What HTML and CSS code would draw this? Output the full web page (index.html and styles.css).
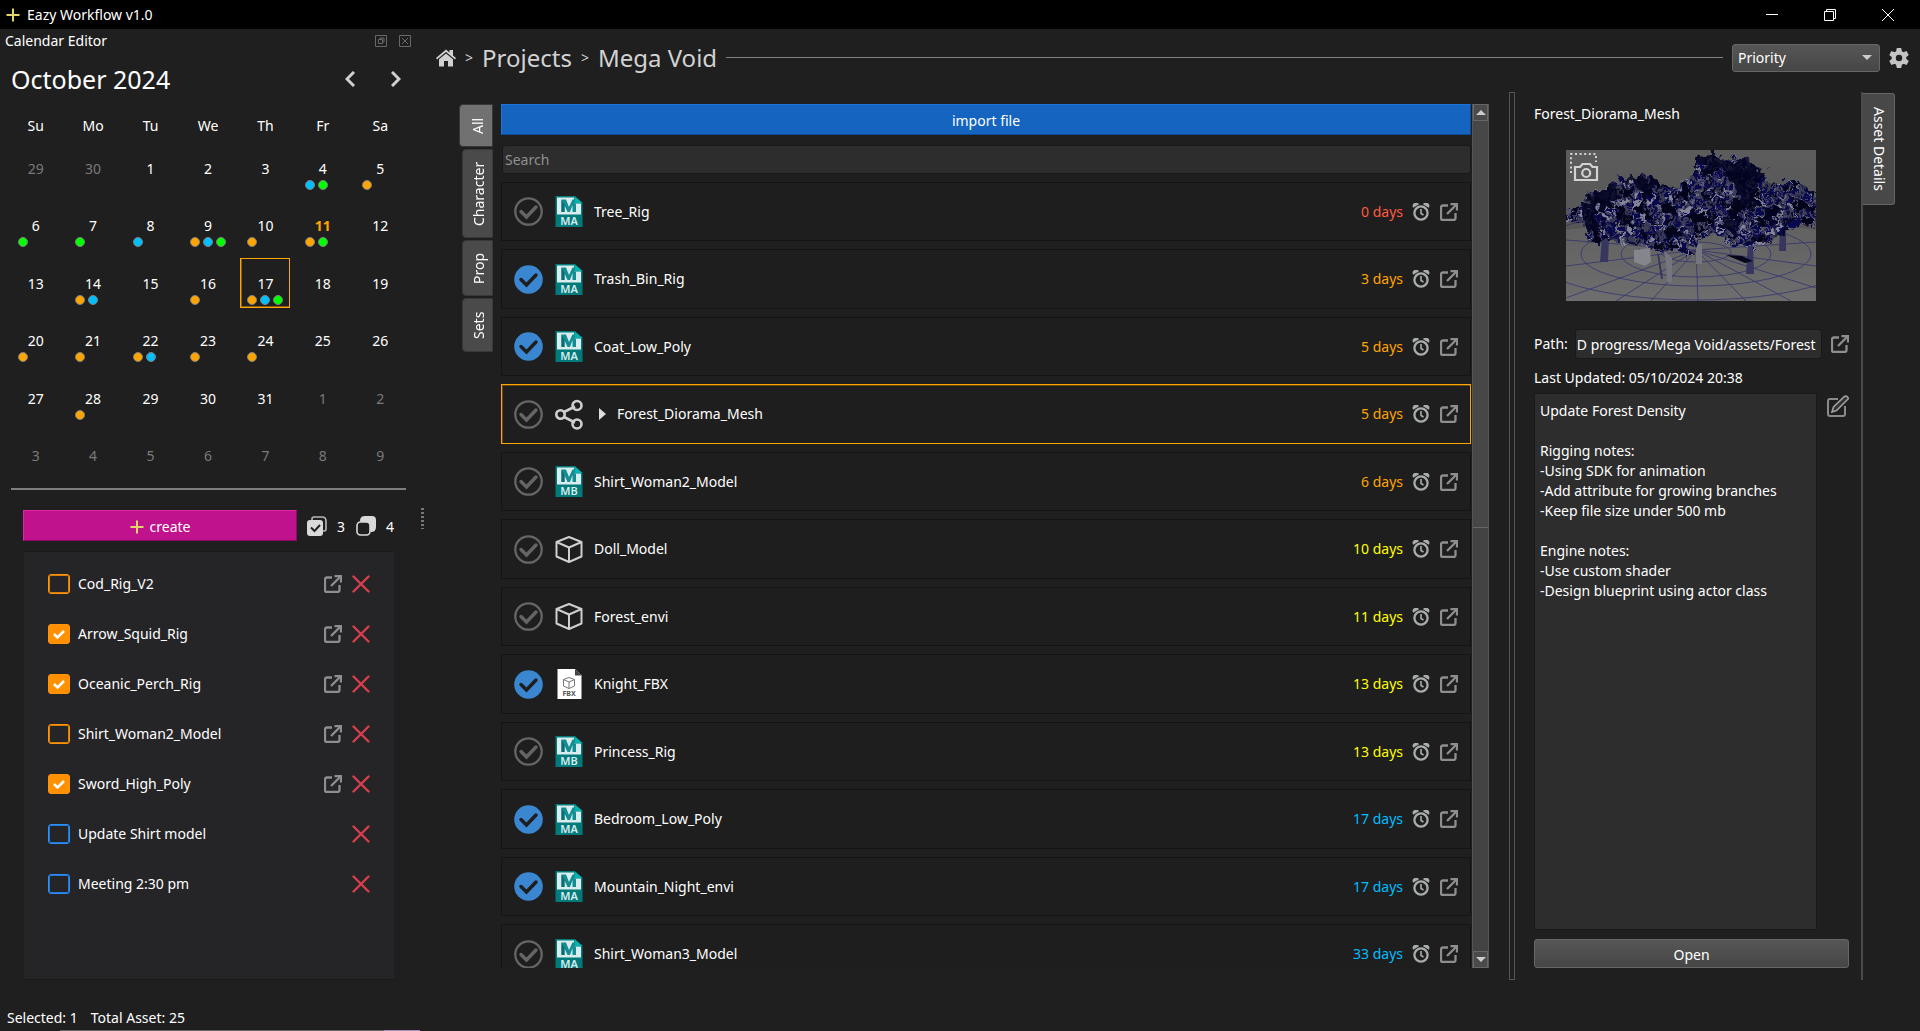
FILE: index.html
```html
<!DOCTYPE html>
<html lang="en">
<head>
<meta charset="utf-8">
<title>Eazy Workflow v1.0</title>
<link rel="stylesheet" href="styles.css">
</head>
<body>
<svg class="sprite" aria-hidden="true">
  <symbol id="plus" viewBox="0 0 14 14"><path d="M7 .5v13M.5 7h13" fill="none" stroke="#e3d56c" stroke-width="2"/></symbol>
  <symbol id="open" viewBox="0 0 18 18"><path d="M8 2.500H3Q1 2.500 1 4.500V15Q1 17 3 17H13.500Q15.500 17 15.500 15V10" fill="none" stroke="currentColor" stroke-width="2.300"/><path d="M7 11L16 2M10.500 1.200H17V7.500" fill="none" stroke="currentColor" stroke-width="2.300"/></symbol>
  <symbol id="cross" viewBox="0 0 18 18"><path d="M1.500 1.500l15 15M16.500 1.500l-15 15" fill="none" stroke="currentColor" stroke-width="2.400" stroke-linecap="round"/></symbol>
  <symbol id="alarm" viewBox="0 0 18 18"><circle cx="9" cy="10" r="6.600" fill="none" stroke="currentColor" stroke-width="2.300"/><path d="M9 6v4.500l2.500 1.500" fill="none" stroke="currentColor" stroke-width="1.600"/><path d="M1.200 4.800A3 3 0 0 1 7 1.200zM16.800 4.800A3 3 0 0 0 11 1.200z" fill="currentColor"/></symbol>
  <symbol id="share" viewBox="0 0 28 30"><path d="M8 13L20 7M8 17L20 23" stroke="currentColor" stroke-width="2.600"/><g fill="none" stroke="currentColor" stroke-width="2.600"><circle cx="5.500" cy="15" r="4.200"/><circle cx="22" cy="6" r="4.500"/><circle cx="22" cy="24.500" r="4.500"/></g></symbol>
  <symbol id="cube" viewBox="0 0 28 28"><path d="M14 1.500L26.500 6.500V21L14 26.500L1.500 21V6.500zM1.500 6.500L14 12L26.500 6.500M14 12V26.500" fill="none" stroke="currentColor" stroke-width="2" stroke-linejoin="round"/></symbol>
  <symbol id="maya" viewBox="0 0 27 31"><path d="M0 0H19L27 7V31H0z" fill="#007a7a"/><path d="M1.500 1.500H18.500V7.500H25.500V18.500H1.500z" fill="#d9ecee"/><path d="M19 0V7H27z" fill="#00b3b0"/><path d="M6 3.500H10.500L13.500 11L17 3.500H18.500V7.500H20.500V16H17V9L14.500 16H12L9 9.500V16H6z" fill="#138d92"/><path d="M6 3.500L9 9.500V16H6z" fill="#0b6b73"/></symbol>
  <symbol id="fbx" viewBox="0 0 25 31"><path d="M1 0H18.500L25 6.500V30H1z" fill="#fff"/><path d="M18.500 0L25 6.500H18.500z" fill="#444"/><path d="M12.500 8.500L18 10.500V17L12.500 19.500L7 17V10.500zM7 10.500L12.500 13L18 10.500M12.500 13V19.500" fill="none" stroke="#777" stroke-width="1"/></symbol>
</svg>

<header class="titlebar">
  <svg class="i14"><use href="#plus"/></svg>
  <span>Eazy Workflow v1.0</span>
  <div class="window-buttons">
    <button aria-label="Minimize"><svg viewBox="0 0 12 12"><path d="M0 5.500h12"/></svg></button>
    <button aria-label="Restore"><svg viewBox="0 0 12 12"><path d="M.5 2.500h9v9h-9zM2.500 2.500v-2h9v9h-2"/></svg></button>
    <button aria-label="Close"><svg viewBox="0 0 12 12"><path d="M0 0l12 12M12 0L0 12"/></svg></button>
  </div>
</header>

<div class="workspace">
  <aside class="sidebar">
    <div class="dock-title">
      <h2>Calendar Editor</h2>
      <button aria-label="Float"><svg viewBox="0 0 12 12"><path d="M.5.5h11v11h-11zM3.500 4.500h4v4h-4zM5 4V3h4v4H8"/></svg></button>
      <button aria-label="Close panel"><svg viewBox="0 0 12 12"><path d="M.5.5h11v11h-11zM3 3l6 6M9 3L3 9"/></svg></button>
    </div>
    <div class="month">
      <h1>October 2024</h1>
      <button aria-label="Previous month"><svg viewBox="0 0 10 16"><path d="M9 1L2 8l7 7"/></svg></button>
      <button aria-label="Next month"><svg viewBox="0 0 10 16"><path d="M1 1l7 7-7 7"/></svg></button>
    </div>
    <table class="calendar">
      <thead><tr><th>Su</th><th>Mo</th><th>Tu</th><th>We</th><th>Th</th><th>Fr</th><th>Sa</th></tr></thead>
      <tbody id="days"></tbody>
    </table>
    <hr class="divider">
    <div class="create-row">
      <button class="create"><svg class="i14"><use href="#plus"/></svg>create</button>
      <svg class="i20" viewBox="0 0 20 20"><path d="M5 4V3Q5 1 7 1H15Q19 1 19 5V13Q19 15 17 15H16" fill="none" stroke="#b8b8b8" stroke-width="1.600"/><rect y="4" width="16" height="16" rx="3" fill="#d9d9d9"/><path d="M4 11.500l3.500 3.500L13 9" fill="none" stroke="#222" stroke-width="2"/></svg>
      <span class="count">3</span>
      <svg class="i20" viewBox="0 0 20 20"><path d="M4 5Q4 0 9 0H16Q20 0 20 4V11Q20 16 15 16z" fill="#d9d9d9"/><rect x="1" y="6" width="13" height="13" rx="3.500" fill="#1f1f1f" stroke="#d9d9d9" stroke-width="1.600"/></svg>
      <span class="count">4</span>
    </div>
    <ul class="tasks" id="tasks"></ul>
    <div class="grip"></div>
  </aside>

  <main class="main">
    <nav class="crumbs">
      <a href="#" aria-label="Home"><svg class="home" viewBox="0 0 20 18"><path d="M0 9L10 .5L13.500 3.500V1H17V6.500L20 9L19 10.500L10 3L1 10.500z" fill="#d0d0d0"/><path d="M3 10.300L10 4.500L17 10.300V17.500H12V12H8V17.500H3z" fill="#d0d0d0"/></svg></a>
      <span>&gt;</span><a href="#">Projects</a><span>&gt;</span><a href="#">Mega Void</a>
      <div class="rule"></div>
      <select aria-label="Sort by"><option>Priority</option></select>
      <button aria-label="Settings"><svg class="i20" viewBox="0 0 20 20"><g fill="#c4c4c4"><path id="tooth" d="M7 4L7.800 0H12.200L13 4V16L12.200 20H7.800L7 16z"/><use href="#tooth" transform="rotate(60 10 10)"/><use href="#tooth" transform="rotate(120 10 10)"/><circle cx="10" cy="10" r="7.300"/></g><circle cx="10" cy="10" r="3.200" fill="#1f1f1f"/></svg></button>
    </nav>
    <div class="panes">
      <div class="tabs">
        <button class="active">All</button><button>Character</button><button>Prop</button><button>Sets</button>
      </div>
      <section class="assets">
        <button class="import">import file</button>
        <input class="search" type="text" placeholder="Search" aria-label="Search">
        <ul class="asset-list" id="assets"></ul>
      </section>
      <div class="scroll"><button class="up" aria-label="Scroll up"></button><div class="thumb"></div><div class="track"></div><button class="down" aria-label="Scroll down"></button></div>
      <div class="splitter"></div>
      <section class="details">
        <h2>Forest_Diorama_Mesh</h2>
        <div class="preview">
          <svg viewBox="0 0 250 151" role="img" aria-label="Wireframe of forest diorama">
            <defs>
              <linearGradient id="sky" x2="0" y2="1"><stop stop-color="#5c5c5c"/><stop offset=".55" stop-color="#565656"/><stop offset="1" stop-color="#737373"/></linearGradient>
              <filter id="rough" x="-5%" y="-5%" width="110%" height="110%" color-interpolation-filters="sRGB"><feTurbulence type="fractalNoise" baseFrequency=".14" numOctaves="2" seed="4"/><feDisplacementMap in="SourceGraphic" scale="16" xChannelSelector="R" yChannelSelector="G"/></filter>
              <filter id="leaf" x="0" y="0" width="100%" height="100%" color-interpolation-filters="sRGB"><feTurbulence type="fractalNoise" baseFrequency=".22" numOctaves="3" seed="9"/><feColorMatrix values="0 0 0 0 .03  0 0 0 0 .03  0 0 0 0 .30  9 0 0 0 -4.200"/></filter>
              <filter id="light" x="0" y="0" width="100%" height="100%" color-interpolation-filters="sRGB"><feTurbulence type="fractalNoise" baseFrequency=".12" numOctaves="3" seed="22"/><feColorMatrix values="0 0 0 0 .52  0 0 0 0 .52  0 0 0 0 .60  0 8 0 0 -3.900"/></filter>
              <filter id="dark" x="0" y="0" width="100%" height="100%" color-interpolation-filters="sRGB"><feTurbulence type="fractalNoise" baseFrequency=".08" numOctaves="3" seed="31"/><feColorMatrix values="0 0 0 0 .01  0 0 0 0 .01  0 0 0 0 .11  14 0 0 0 -7.600"/></filter>
              <clipPath id="crown"><path d="M0 62L16 56L22 42L50 33L54 25L70 28L82 24L96 34L112 38L122 28L132 20L130 8L146 3L156 9L170 7L184 10L190 20L202 23L200 36L214 32L232 31L250 42V77L236 74L226 80L214 86L204 92L190 97L166 96L150 84L132 90L120 108L106 100L96 104L82 98L70 97L56 92L38 90L28 92L18 86L20 74L0 72z"/></clipPath>
            </defs>
            <path d="M0 0H250V151H0z" fill="url(#sky)"/>
            <path d="M0 80Q120 62 250 80V151H0z" fill="#6a6a6a" opacity=".6"/>
            <g fill="none" stroke="#2a2a72" stroke-width=".9" opacity=".75">
              <ellipse cx="130" cy="102" rx="35" ry="10"/><ellipse cx="130" cy="104" rx="75" ry="23"/><ellipse cx="130" cy="104" rx="115" ry="32"/><ellipse cx="130" cy="104" rx="165" ry="46"/>
              <path d="M130 100L0 90M130 100L0 116M130 100L0 148M130 100L50 151M130 100L85 151M130 100L132 151M130 100L180 151M130 100L225 151M130 100L250 138M130 100L250 116M130 100L250 92"/>
            </g>
            <g fill="#36365f"><path d="M36 88h7l-1 24h-8zM93 104l4 25h-2l-4-26zM182 92h5l1 32h-8zM214 80h6v21h-7z"/><path d="M98 100l8 8v24h-5l-1-18zM130 94h6v20h-6z" fill="#75757f"/></g>
            <g filter="url(#rough)">
              <g clip-path="url(#crown)">
                <path d="M0 0H250V151H0z" fill="#3b3c54"/>
                <path d="M0 0H250V151H0z" filter="url(#light)"/>
                <path d="M0 0H250V151H0z" filter="url(#leaf)"/>
                <path d="M0 0H250V151H0z" filter="url(#dark)"/>
                <g fill="#03041f" opacity=".85"><path d="M132 6L150 3L162 12L184 8L200 22L188 40L194 56L178 58L170 40L160 20L136 16z"/><path d="M20 46L46 34L56 44L42 60L30 58L26 84L18 80zM56 26L92 30L86 46L70 38z"/><path d="M158 66L172 70L168 84L156 78zM200 56L214 58L208 74L198 66zM240 38L250 42V48zM105 44L114 46L110 54zM140 28L148 30L144 38z"/></g>
              </g>
            </g>
            <path d="M68 100l16-2 1 14-6 4-11-4z" fill="#85858d"/><path d="M160 105l16 1 11 5-8 2z" fill="#04041a"/>
          </svg>
          <button class="camera" aria-label="Take screenshot"><svg viewBox="0 0 30 30"><path d="M2 21V2H27V10" fill="none" stroke="#d2d2d2" stroke-width="2" stroke-dasharray="2 2.600"/><path d="M6 15H11L13.500 12H21L23.500 15H28V28H6z" fill="none" stroke="#d2d2d2" stroke-width="2.200"/><circle cx="17.200" cy="21" r="4" fill="none" stroke="#d2d2d2" stroke-width="2.200"/></svg></button>
        </div>
        <div class="path"><label for="path">Path:</label><input id="path" type="text" value="D progress/Mega Void/assets/Forest"><button aria-label="Open folder"><svg class="i18"><use href="#open"/></svg></button></div>
        <p>Last Updated: 05/10/2024 20:38</p>
        <div class="notes">
          <textarea aria-label="Notes">Update Forest Density

Rigging notes:
-Using SDK for animation
-Add attribute for growing branches
-Keep file size under 500 mb

Engine notes:
-Use custom shader
-Design blueprint using actor class</textarea>
          <button aria-label="Edit notes"><svg viewBox="0 0 22 22"><path d="M11 4H3Q1 4 1 6V19Q1 21 3 21H16Q18 21 18 19V11" fill="none" stroke="#8a8a8a" stroke-width="2"/><path d="M5 17L6.500 12L17.500 1.500Q19 .5 20.500 2T20.500 4.500L9.500 15.500z" fill="#333" stroke="#a0a0a0" stroke-width="1.600"/></svg></button>
        </div>
        <button class="open">Open</button>
      </section>
      <div class="side-tabs"><button>Asset Details</button></div>
    </div>
  </main>
</div>
<footer class="status"><span>Selected: 1</span><span>Total Asset: 25</span></footer>
<script src="app.js"></script>
</body>
</html>
```
FILE: styles.css
```css
* { box-sizing: border-box; }
html, body { height: 100%; }
body { margin: 0; display: flex; flex-direction: column; background: #1f1f1f; color: #fff; font: 14px/20px "Noto Sans", "Open Sans", sans-serif; overflow: hidden; }
h1, h2, p, ul { margin: 0; padding: 0; font-weight: 400; list-style: none; }
h2 { font-size: 14px; }
button, input, select, textarea { font: inherit; color: inherit; margin: 0; padding: 0; border: 0; background: none; outline: 0; }
button { display: flex; align-items: center; justify-content: center; flex: none; }
a { color: inherit; text-decoration: none; }
svg { display: block; flex: none; }
.sprite { position: absolute; width: 0; height: 0; }
.i14 { width: 14px; height: 14px; }
.i18 { width: 18px; height: 18px; color: #8e8e8e; }
.i20 { width: 20px; height: 20px; }

.titlebar { flex: none; height: 29px; background: #000; display: flex; align-items: center; gap: 7px; padding: 0 26px 0 6px; }
.window-buttons { margin-left: auto; display: flex; gap: 46px; }
.window-buttons svg { width: 12px; height: 12px; fill: none; stroke: #fff; overflow: visible; }

.workspace { flex: 1; min-height: 0; display: flex; }
.sidebar { position: relative; flex: none; width: 430px; display: flex; flex-direction: column; }
.dock-title { display: flex; align-items: center; gap: 12px; height: 23px; padding: 0 19px 0 5px; }
.dock-title h2, .month h1 { margin-right: auto; }
.dock-title svg { width: 12px; height: 12px; fill: none; stroke: #686868; }
.month { display: flex; align-items: center; gap: 36px; height: 54px; padding: 0 29px 0 11px; }
.month h1 { font-size: 25px; line-height: 32px; }
.month svg { width: 10px; height: 16px; fill: none; stroke: #d0d0d0; stroke-width: 3; }
.calendar { width: 402px; margin: 6px 0 0 7px; table-layout: fixed; border-collapse: collapse; }
.calendar th { height: 27px; padding: 0; font-weight: 400; }
.calendar td { height: 57px; padding: 0; text-align: center; }
.calendar tr:nth-child(even) td { height: 58px; }
.day { display: flex; flex-direction: column; width: 50px; height: 50px; margin: 0 auto; padding-top: 15px; border: 1px solid transparent; }
.day.selected { border-color: #ffa500; box-shadow: inset 1px -1px #8a5c0c; }
.day.other { color: #7a7a7a; }
.day.today { color: #ffa500; font-weight: 700; }
.dots { display: flex; gap: 3px; padding: 1px 0 0 6px; }
.dot { width: 10px; height: 10px; border-radius: 50%; border: 1px solid #808080; }
.dot.o { background: #ffa500; } .dot.b { background: #00bfff; } .dot.g { background: #0f0; }
.divider { height: 2px; width: 395px; margin: 4px 0 20px 11px; border: 0; background: #7f7f7f; }
.create-row { display: flex; align-items: center; gap: 10px; padding-left: 23px; }
.create { width: 274px; height: 31px; gap: 6px; padding-top: 2px; background: #c0128c; border: 1px solid; border-color: #dd25a6 #8f0a67 #8f0a67 #dd25a6; }
.count { width: 9px; padding-top: 2px; }
.tasks { flex: 1; margin: 10px 36px 0 24px; padding: 7px 24px; background: #252527; border: solid #191919; border-width: 1px 0; }
.tasks li { display: flex; align-items: center; gap: 10px; height: 50px; }
.tasks label { flex: 1; }
.tasks .cross, .tasks .i18 { width: 18px; height: 18px; }
.tasks .cross { color: #d6404c; }
.tick { appearance: none; flex: none; width: 22px; height: 20px; border: 1px solid #ff9408; box-shadow: inset 0 0 0 1px #d97e07; border-radius: 3px; margin-right: -2px; }
.tick.blue { border-color: #2a91fb; box-shadow: inset 0 0 0 1px #2278d4; }
.tick:checked { background: #ff9000 url("data:image/svg+xml,%3Csvg xmlns='http://www.w3.org/2000/svg' viewBox='0 0 20 18'%3E%3Cpath d='M5 9l3.500 3.500L15 6' fill='none' stroke='white' stroke-width='2.500'/%3E%3C/svg%3E"); box-shadow: none; }
.grip { position: absolute; left: 421px; top: 479px; width: 3px; height: 21px; background: repeating-linear-gradient(#777 0 2px, transparent 2px 4px); }

.main { flex: 1; min-width: 0; display: flex; flex-direction: column; }
.crumbs { display: flex; align-items: center; gap: 9px; height: 56px; padding: 1px 11px 0 6px; color: #d2d2d2; }
.crumbs a { font-size: 24px; line-height: 32px; }
.home { width: 20px; height: 18px; }
.rule { flex: 1; height: 1px; background: #808080; }
select { appearance: none; width: 148px; height: 28px; padding: 0 5px; color: #fff; border: 1px solid #666; border-radius: 3px; background: url("data:image/svg+xml,%3Csvg xmlns='http://www.w3.org/2000/svg' viewBox='0 0 10 6'%3E%3Cpath d='M0 0h10L5 5z' fill='%23ccc'/%3E%3C/svg%3E") right 7px center / 10px 6px no-repeat, linear-gradient(#565656, #464646); }
.panes { flex: 1; min-height: 0; display: flex; padding-top: 7px; }
.tabs { display: flex; flex-direction: column; align-items: flex-end; gap: 2px; width: 63px; padding-top: 12px; }
.tabs button { writing-mode: vertical-rl; transform: rotate(180deg); width: 31px; background: #4a4a4a; border: 1px solid #383838; border-radius: 0 4px 4px 0; padding: 10px 3px 10px 0; }
.tabs button.active { width: 34px; background: #717171; }
.tabs button:nth-child(1) { height: 43px; } .tabs button:nth-child(2) { height: 89px; } .tabs button:nth-child(3) { height: 56px; } .tabs button:nth-child(4) { height: 54px; }
.assets { flex: 1; min-width: 0; margin: 12px 1px 12px 8px; display: flex; flex-direction: column; overflow: hidden; }
.import { height: 31px; padding-top: 2px; background: #1464c0; border: 1px solid; border-color: #1b74dc #0d4a94 #0d4a94 #1b74dc; }
.search { flex: none; height: 29px; margin: 10px 0 8px 1px; padding: 0 2px; background: #2d2d2d; border: 1px solid #191919; border-radius: 3px; }
.search::placeholder { color: #909090; opacity: 1; }
.asset-list { flex: 1; min-height: 0; overflow: hidden; }
.asset-list li { display: flex; align-items: center; height: 59px; margin-bottom: 8px; padding: 0 12px; border: 1px solid #141414; background: #1e1e1e; }
.asset-list li:nth-child(even) { height: 60px; }
.asset-list li.selected { border-color: #ffa500; box-shadow: inset 1px 1px #6e4a10; }
.done { appearance: none; flex: none; width: 29px; height: 29px; margin-right: 12px; background: url("data:image/svg+xml,%3Csvg xmlns='http://www.w3.org/2000/svg' viewBox='0 0 29 29'%3E%3Ccircle cx='14.500' cy='14.500' r='13.200' fill='none' stroke='%23656565' stroke-width='2.300'/%3E%3Cpath d='M7 14.500l5.500 5.500L22 10' fill='none' stroke='%23656565' stroke-width='3.500' stroke-linecap='round'/%3E%3C/svg%3E"); }
.done:checked { background-image: url("data:image/svg+xml,%3Csvg xmlns='http://www.w3.org/2000/svg' viewBox='0 0 29 29'%3E%3Ccircle cx='14.500' cy='14.500' r='14.300' fill='%233b86d0'/%3E%3Cpath d='M7 14.500l5.500 5.500L22 10' fill='none' stroke='%231e1e1e' stroke-width='3.500' stroke-linecap='round'/%3E%3C/svg%3E"); }
.kind { display: grid; justify-items: center; width: 28px; margin-right: 11px; color: #cfcfcf; }
.kind svg, .kind span { grid-area: 1 / 1; }
.kind svg { width: 28px; height: 31px; }
.kind span { align-self: end; font-size: 11px; line-height: 12px; font-weight: 600; color: #d9ecee; }
.kind .ext-fbx { font-size: 7px; font-weight: 700; color: #555; }
.arrow { width: 7px; height: 12px; margin: 0 11px 0 5px; fill: #ddd; }
.asset-list label { flex: 1; }
.days { margin-right: 9px; }
.red { color: #ff5a40; } .orange { color: #ffa500; } .yellow { color: #ff0; } .cyan { color: #00bfff; }
.asset-list button + button { margin-left: 10px; }
.alarm { width: 18px; height: 18px; color: #a8acac; }
.scroll { flex: none; width: 17px; margin: 12px 0; display: flex; flex-direction: column; background: #2a2a2a; border: 1px solid #555; border-width: 0 1px; }
.thumb { flex: 406; background: #474747; border-bottom: 1px solid #666; }
.track { flex: 424; background: #434343; }
.scroll button { height: 17px; background: #4a4a4a; border: 1px solid #666; }
.scroll button::before { content: ""; border: 5px solid transparent; border-top: 0; border-bottom-color: #ccc; }
.scroll .down::before { border: 5px solid transparent; border-bottom: 0; border-top-color: #ccc; }
.splitter { flex: none; width: 6px; margin-left: 20px; border: 1px solid #555; }
.details { flex: none; width: 346px; padding: 12px 12px 12px 19px; display: flex; flex-direction: column; }
.preview { position: relative; width: 250px; margin: 26px 0 28px 32px; }
.preview > svg { width: 250px; height: 151px; }
.camera { position: absolute; left: 3px; top: 2px; }
.camera svg { width: 30px; height: 30px; }
.path { display: flex; align-items: center; }
.path input { flex: 1; min-width: 0; height: 30px; margin: 0 9px 0 7px; padding: 0 2px 0 1px; background: #2d2d2d; border: 1px solid #191919; border-radius: 3px; }
.details p { margin: 9px 0 5px; }
.notes { flex: 1; display: flex; align-items: flex-start; gap: 10px; }
.notes textarea { flex: 1; align-self: stretch; min-width: 0; padding: 7px 5px; resize: none; background: #2d2d2d; border: 1px solid #191919; }
.notes svg { width: 22px; height: 24px; margin-top: 1px; }
.open { height: 29px; margin-top: 9px; padding-top: 2px; border: 1px solid #666; border-radius: 3px; background: linear-gradient(#565656, #464646); }
.side-tabs { width: 59px; border-left: 2px solid #4a4a4a; padding-top: 1px; }
.side-tabs button { writing-mode: vertical-rl; width: 32px; height: 112px; background: #484848; border: 1px solid #666; border-left: 0; border-radius: 0 3px 3px 0; }
.status { flex: none; height: 51px; display: flex; gap: 13px; padding: 28px 7px 0; background: linear-gradient(90deg, #6b6363 324px, #a78bc4 324px) 60px bottom / 360px 1px no-repeat; }
```
FILE: app.js
```js
const icon = (id, cls) => `<svg class="${cls}"><use href="#${id}"/></svg>`;

const marks = { 4: "bg", 5: "o", 6: "g", 7: "g", 8: "b", 9: "obg", 10: "o", 11: "og", 14: "ob", 16: "o", 17: "obg", 20: "o", 21: "o", 22: "ob", 23: "o", 24: "o", 28: "o" };
let html = "";
for (let week = 0; week < 6; week++) {
  html += "<tr>";
  for (let wd = 0; wd < 7; wd++) {
    const date = new Date(2024, 8, 29 + week * 7 + wd);
    const n = date.getDate();
    const current = date.getMonth() === 9;
    const cls = !current ? "other" : n === 11 ? "today" : n === 17 ? "selected" : "";
    const dots = current && marks[n] ? [...marks[n]].map(c => `<i class="dot ${c}"></i>`).join("") : "";
    html += `<td><div class="day ${cls}">${n}<div class="dots">${dots}</div></div></td>`;
  }
  html += "</tr>";
}
document.getElementById("days").innerHTML = html;

const tasks = [
  ["Cod_Rig_V2", 0, 1], ["Arrow_Squid_Rig", 1, 1], ["Oceanic_Perch_Rig", 1, 1], ["Shirt_Woman2_Model", 0, 1],
  ["Sword_High_Poly", 1, 1], ["Update Shirt model", 0, 0], ["Meeting 2:30 pm", 0, 0]
];
document.getElementById("tasks").innerHTML = tasks.map(([name, done, linked], i) => `<li>
  <input type="checkbox" id="task${i}" class="tick ${linked ? "" : "blue"}" ${done ? "checked" : ""}>
  <label for="task${i}">${name}</label>
  ${linked ? `<button aria-label="Open ${name}">${icon("open", "i18")}</button>` : ""}
  <button aria-label="Delete ${name}">${icon("cross", "cross")}</button></li>`).join("");

const assets = [
  ["Tree_Rig", "MA", 0, 0, "red"], ["Trash_Bin_Rig", "MA", 1, 3, "orange"], ["Coat_Low_Poly", "MA", 1, 5, "orange"],
  ["Forest_Diorama_Mesh", "share", 0, 5, "orange"], ["Shirt_Woman2_Model", "MB", 0, 6, "orange"],
  ["Doll_Model", "cube", 0, 10, "yellow"], ["Forest_envi", "cube", 0, 11, "yellow"], ["Knight_FBX", "FBX", 1, 13, "yellow"],
  ["Princess_Rig", "MB", 0, 13, "yellow"], ["Bedroom_Low_Poly", "MA", 1, 17, "cyan"],
  ["Mountain_Night_envi", "MA", 1, 17, "cyan"], ["Shirt_Woman3_Model", "MA", 0, 33, "cyan"]
];
const kinds = {
  MA: icon("maya", "") + "<span>MA</span>", MB: icon("maya", "") + "<span>MB</span>",
  FBX: icon("fbx", "") + '<span class="ext-fbx">FBX</span>', share: icon("share", ""), cube: icon("cube", "")
};
document.getElementById("assets").innerHTML = assets.map(([name, kind, done, days, colour], i) => `<li class="${kind === "share" ? "selected" : ""}">
  <input type="checkbox" class="done" id="asset${i}" ${done ? "checked" : ""}>
  <div class="kind">${kinds[kind]}</div>
  ${kind === "share" ? '<svg class="arrow" viewBox="0 0 7 12"><path d="M0 0l7 6-7 6z"/></svg>' : ""}
  <label for="asset${i}">${name}</label>
  <span class="days ${colour}">${days} days</span>
  <button aria-label="Set deadline">${icon("alarm", "alarm")}</button>
  <button aria-label="Open ${name}">${icon("open", "i18")}</button></li>`).join("");
```
